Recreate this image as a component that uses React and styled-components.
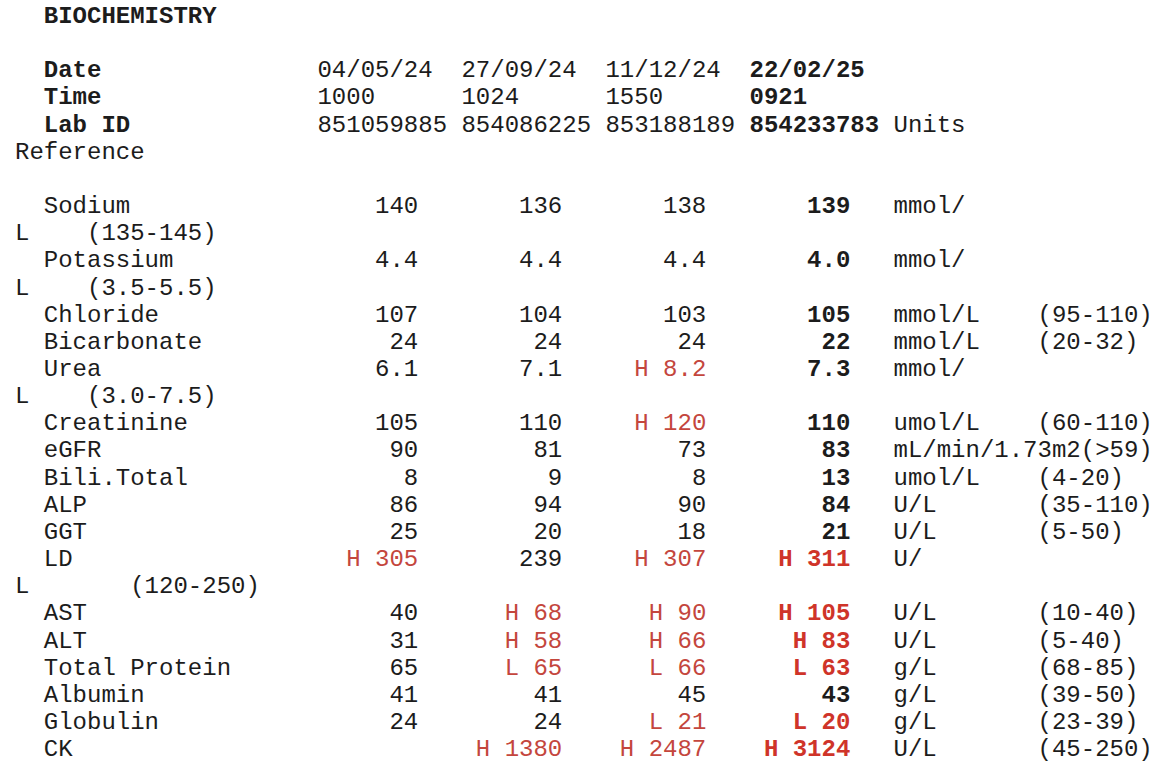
import React from 'react';
import styled, { createGlobalStyle } from 'styled-components';

const GlobalStyle = createGlobalStyle`
  html, body {
    margin: 0;
    padding: 0;
    background: #ffffff;
  }
  body {
    font-family: 'Courier New', 'Nimbus Mono PS', 'Nimbus Mono L', 'FreeMono', 'Liberation Mono', monospace;
    font-size: 24px;
    color: #1c1c1c;
  }
`;

const Report = styled.div`
  padding: 3px 16px 0 15px;
  line-height: 27.15px;
  white-space: pre;
`;

const Title = styled.div`
  padding-left: 2ch;
  font-weight: bold;
`;

const Blank = styled.div`
  height: 27.15px;
`;

const HeaderRow = styled.div`
  display: flex;
`;

const HeaderLabel = styled.div`
  width: 21ch;
  padding-left: 2ch;
  box-sizing: border-box;
  font-weight: bold;
`;

const HeaderCell = styled.div`
  width: 10ch;
  font-weight: ${(props) => (props.latest ? 'bold' : 'normal')};
`;

const Plain = styled.div``;

const Row = styled.div`
  display: flex;
`;

const Name = styled.div`
  width: 18ch;
  padding-left: 2ch;
  box-sizing: border-box;
`;

const Value = styled.div`
  width: 10ch;
  text-align: right;
  font-weight: ${(props) => (props.latest ? 'bold' : 'normal')};
  color: ${(props) => (props.flag ? (props.latest ? '#cf3429' : '#c4463d') : 'inherit')};
`;

const Unit = styled.div`
  margin-left: 3ch;
  min-width: 10ch;
`;

const Range = styled.div``;

const WrapLine = styled.div``;

const headers = {
  dates: ['04/05/24', '27/09/24', '11/12/24', '22/02/25'],
  times: ['1000', '1024', '1550', '0921'],
  ids: ['851059885', '854086225', '853188189', '854233783'],
};

const results = [
  { name: 'Sodium', values: ['140', '136', '138', '139'], unit: 'mmol/L', range: '(135-145)', wrap: true },
  { name: 'Potassium', values: ['4.4', '4.4', '4.4', '4.0'], unit: 'mmol/L', range: '(3.5-5.5)', wrap: true },
  { name: 'Chloride', values: ['107', '104', '103', '105'], unit: 'mmol/L', range: '(95-110)' },
  { name: 'Bicarbonate', values: ['24', '24', '24', '22'], unit: 'mmol/L', range: '(20-32)' },
  { name: 'Urea', values: ['6.1', '7.1', 'H 8.2', '7.3'], unit: 'mmol/L', range: '(3.0-7.5)', wrap: true },
  { name: 'Creatinine', values: ['105', '110', 'H 120', '110'], unit: 'umol/L', range: '(60-110)' },
  { name: 'eGFR', values: ['90', '81', '73', '83'], unit: 'mL/min/1.73m2', range: '(>59)' },
  { name: 'Bili.Total', values: ['8', '9', '8', '13'], unit: 'umol/L', range: '(4-20)' },
  { name: 'ALP', values: ['86', '94', '90', '84'], unit: 'U/L', range: '(35-110)' },
  { name: 'GGT', values: ['25', '20', '18', '21'], unit: 'U/L', range: '(5-50)' },
  { name: 'LD', values: ['H 305', '239', 'H 307', 'H 311'], unit: 'U/L', range: '(120-250)', wrap: true },
  { name: 'AST', values: ['40', 'H 68', 'H 90', 'H 105'], unit: 'U/L', range: '(10-40)' },
  { name: 'ALT', values: ['31', 'H 58', 'H 66', 'H 83'], unit: 'U/L', range: '(5-40)' },
  { name: 'Total Protein', values: ['65', 'L 65', 'L 66', 'L 63'], unit: 'g/L', range: '(68-85)' },
  { name: 'Albumin', values: ['41', '41', '45', '43'], unit: 'g/L', range: '(39-50)' },
  { name: 'Globulin', values: ['24', '24', 'L 21', 'L 20'], unit: 'g/L', range: '(23-39)' },
  { name: 'CK', values: ['', 'H 1380', 'H 2487', 'H 3124'], unit: 'U/L', range: '(45-250)' },
];

function isFlagged(v) {
  return v.startsWith('H ') || v.startsWith('L ');
}

function ResultRow({ item }) {
  const cells = item.values.map((v, i) => (
    <Value key={i} latest={i === 3} flag={isFlagged(v)}>
      {v}
    </Value>
  ));

  if (item.wrap) {
    const head = item.unit.slice(0, -1);
    const tail = item.unit.slice(-1) + ' '.repeat(10 - item.unit.length) + item.range;
    return (
      <>
        <Row>
          <Name>{item.name}</Name>
          {cells}
          <Unit>{head}</Unit>
        </Row>
        <WrapLine>{tail}</WrapLine>
      </>
    );
  }

  return (
    <Row>
      <Name>{item.name}</Name>
      {cells}
      <Unit>{item.unit}</Unit>
      <Range>{item.range}</Range>
    </Row>
  );
}

export default function App() {
  return (
    <>
      <GlobalStyle />
      <Report>
        <Title>BIOCHEMISTRY</Title>
        <Blank />
        <HeaderRow>
          <HeaderLabel>Date</HeaderLabel>
          {headers.dates.map((d, i) => (
            <HeaderCell key={i} latest={i === 3}>{d}</HeaderCell>
          ))}
        </HeaderRow>
        <HeaderRow>
          <HeaderLabel>Time</HeaderLabel>
          {headers.times.map((d, i) => (
            <HeaderCell key={i} latest={i === 3}>{d}</HeaderCell>
          ))}
        </HeaderRow>
        <HeaderRow>
          <HeaderLabel>Lab ID</HeaderLabel>
          {headers.ids.map((d, i) => (
            <HeaderCell key={i} latest={i === 3}>{d}</HeaderCell>
          ))}
          <Plain>Units</Plain>
        </HeaderRow>
        <Plain>Reference</Plain>
        <Blank />
        {results.map((item) => (
          <ResultRow key={item.name} item={item} />
        ))}
      </Report>
    </>
  );
}
